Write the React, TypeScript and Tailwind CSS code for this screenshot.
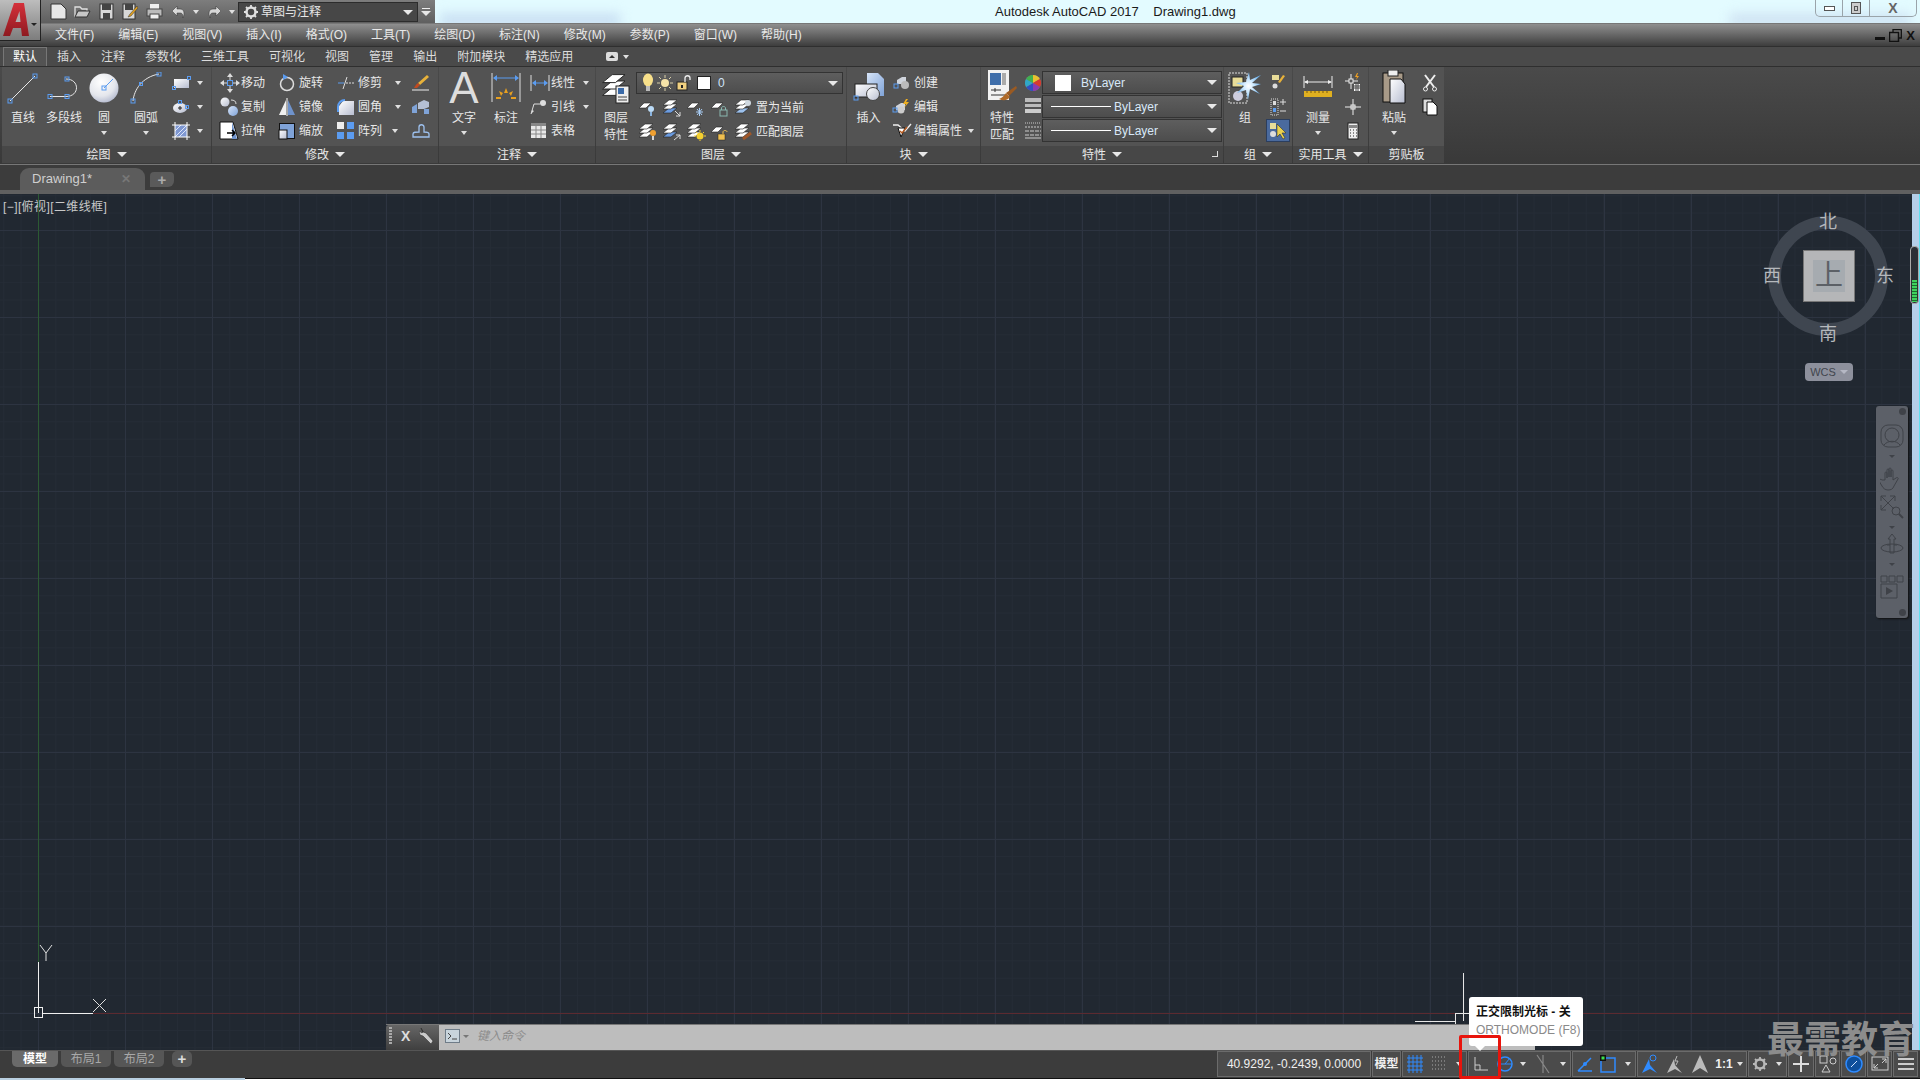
import React from "react";

const B = "#5b9cf0";
const W = "#e8e8e8";
type C = { children?: React.ReactNode };
const Svg = ({ w, h, children }: C & { w: number; h: number }) => (
  <svg width={w} height={h} viewBox={`0 0 ${w} ${h}`} fill="none" className="block shrink-0">{children}</svg>
);
const H = ({ x, y, s = 4 }: { x: number; y: number; s?: number }) => <rect x={x - s / 2} y={y - s / 2} width={s} height={s} stroke={B} />;
const Down = () => <div className="w-0 h-0 border-x-[3px] border-x-transparent border-t-[4px] border-t-[#e0e0e0]" />;
const DownL = () => <div className="w-0 h-0 border-x-[5px] border-x-transparent border-t-[5px] border-t-[#e8e8e8]" />;

const Defs = () => (
  <svg width="0" height="0" className="absolute">
    <defs>
      <radialGradient id="gc" cx="0.4" cy="0.3" r="0.8"><stop offset="0" stopColor="#ffffff" /><stop offset="0.6" stopColor="#e4e6ec" /><stop offset="1" stopColor="#a9b0c8" /></radialGradient>
      <linearGradient id="gw" x1="0" y1="0" x2="1" y2="1"><stop offset="0" stopColor="#ffffff" /><stop offset="1" stopColor="#b7bdd0" /></linearGradient>
      <linearGradient id="gb" x1="0" y1="0" x2="1" y2="1"><stop offset="0" stopColor="#d6e4f8" /><stop offset="1" stopColor="#7fa3d8" /></linearGradient>
      <linearGradient id="gA" x1="0" y1="0" x2="0" y2="1"><stop offset="0" stopColor="#d5303a" /><stop offset="1" stopColor="#8e1a20" /></linearGradient>
      <radialGradient id="gs"><stop offset="0" stopColor="#ffffff" /><stop offset="0.4" stopColor="#cfeaff" /><stop offset="1" stopColor="#6fb4f0" /></radialGradient>
    </defs>
  </svg>
);

/* ---------- Draw ---------- */
const ILine = () => <Svg w={32} h={32}><path d="M3 29 28 4" stroke={W} /><H x={3} y={29} /><H x={28} y={4} /></Svg>;
const IPoly = () => <Svg w={34} h={24}><path d="M3 20.5H19M19 3c14 0 14 17.500 0 17.500" stroke={W} /><H x={3} y={20.5} /><H x={20} y={20.5} /><H x={20} y={3} /></Svg>;
const ICircle = () => <Svg w={32} h={32}><circle cx="16" cy="16" r="14.500" fill="url(#gc)" /><path d="M16 16 25 7" stroke={B} /><H x={16} y={16} /></Svg>;
const IArc = () => <Svg w={32} h={32}><path d="M3 29C4 18 12 5 29 2" stroke={W} /><H x={3} y={29} /><H x={11} y={12} s={3} /><H x={29} y={2} /></Svg>;
const IRect = () => <Svg w={20} h={14}><rect x="2" y="3" width="15" height="9" fill="url(#gw)" /><H x={2} y={12} s={3} /><H x={17} y={2} s={3} /></Svg>;
const IEll = () => <Svg w={20} h={14}><ellipse cx="8" cy="8" rx="7" ry="5" fill="url(#gw)" /><path d="M6 8h4M8 6v4" stroke="#222" /><H x={8} y={2} s={3} /><H x={15} y={7} s={3} /></Svg>;
const IHatch = () => <Svg w={18} h={18}><rect x="3" y="3" width="12" height="12" fill="#7f98d2" /><path d="M3 9 9 3M3 15 15 3M7 15l8-8" stroke="#dde6fa" /><path d="M0 3h18M0 15h18M3 0v18M15 0v18" stroke="#fff" /></Svg>;

/* ---------- Modify ---------- */
const IMove = () => <Svg w={22} h={22}><path d="M11 1 8 5h6zM11 21l-3-4h6zM1 11l4-3v6zM21 11l-4-3v6z" fill="#ddd" /><path d="M11 4v4M11 14v4M4 11h4M14 11h4" stroke="#ddd" /><rect x="8.500" y="8.500" width="5" height="5" stroke={B} /></Svg>;
const ICopy = () => <Svg w={22} h={22}><circle cx="6" cy="6" r="4.500" fill="url(#gw)" /><circle cx="14" cy="15" r="5" fill="url(#gb)" /><path d="M12 4c3 0 5 1 5 4" stroke="#ddd" /></Svg>;
const IStretch = () => <Svg w={22} h={22}><path d="M1 2h13l5 17H1z" fill="#fff" stroke="#111" /><path d="M13 2l5 17h-5z" fill="#6f93cc" /><path d="M8 13h8M13 10l3 3-3 3" stroke="#000" strokeWidth="1.500" /></Svg>;
const IRot = () => <Svg w={18} h={20}><circle cx="9" cy="11" r="6.500" stroke="#ddd" strokeWidth="1.500" /><path d="M5 1l5 3-5 3z" fill={B} /></Svg>;
const IMirror = () => <Svg w={18} h={20}><path d="M8 3 1 18h7z" fill="#f0f0f0" /><path d="M10 3l7 15h-7z" fill="#6f93cc" /><path d="M9 1v18" stroke="#fff" /></Svg>;
const IScale = () => <Svg w={18} h={18}><rect x="1.500" y="1.500" width="15" height="15" fill="#7fa3d8" stroke="#111" /><rect x="1" y="8" width="8" height="9" fill="url(#gw)" stroke="#111" /></Svg>;
const ITrim = () => <Svg w={18} h={14}><path d="M1 7h6" stroke={B} /><path d="M9 7h8" stroke="#ddd" strokeDasharray="2 1" /><path d="M10 1 6 13" stroke="#ddd" /></Svg>;
const IFillet = () => <Svg w={18} h={18}><path d="M6 3h11v14H2V8z" fill="url(#gw)" /><path d="M1 14V9c0-4 3-7 7-7" stroke={B} strokeWidth="2" /></Svg>;
const IArray = () => <Svg w={18} h={18}><rect x="0" y="0" width="7" height="7" fill="#eee" /><rect x="10" y="0" width="7" height="7" fill={B} /><rect x="0" y="10" width="7" height="7" fill={B} /><rect x="10" y="10" width="7" height="7" fill={B} /></Svg>;
const IBrush = () => <Svg w={18} h={18}><path d="M15 1l2 2-9 8-2-2z" fill="#e8b23a" /><path d="M6 9l2 2-3 3H2c1-1 1-3 4-5z" fill="#c04a20" /><path d="M0 16h17" stroke="#eee" /></Svg>;
const IExpl = () => <Svg w={18} h={16}><path d="M0 8l5-3v9H0z" fill="#7fa3d8" /><path d="M6 4l6-3 5 2v5l-5 2H6z" fill="#b5c0d5" /><path d="M12 10h5v5h-5z" fill="#7fa3d8" /></Svg>;
const IOff = () => <Svg w={18} h={16}><path d="M1 14h16v-3c0-2-3-2-5-2V4c0-3-5-3-5 0v5C4 9 1 9 1 11z" stroke="#9ec2f0" strokeWidth="1.300" /></Svg>;

/* ---------- Annotate ---------- */
const IDim = () => <Svg w={30} h={30}><path d="M1 0v29M29 0v29" stroke="#ddd" /><path d="M3 5h24" stroke={B} /><path d="M2 5l4-3v6zM28 5l-4-3v6z" fill={B} /><path d="M15 15l-2 5h4zM8 18l2 5 2-3zM22 18l-2 5-2-3zM5 24h5v2H5zM20 24h5v2h-5z" fill="#e8a020" /></Svg>;
const ILin = () => <Svg w={20} h={16}><path d="M1 0v16M19 0v16" stroke="#ddd" /><path d="M3 8h14" stroke={B} /><path d="M2 8l4-3v6zM18 8l-4-3v6z" fill={B} /></Svg>;
const ILead = () => <Svg w={20} h={16}><path d="M1 15l3-10h6" stroke="#ddd" /><path d="M1 15l1-4 2 1z" fill="#ddd" /><circle cx="13" cy="4" r="3" fill="#ddd" /></Svg>;
const ITbl = () => <Svg w={18} h={16}><rect x="1" y="0" width="15" height="15" fill="#e8e8e8" /><rect x="1" y="0" width="15" height="3" fill="#888" /><path d="M1 7h15M1 11h15M6 3v12M11 3v12" stroke="#888" /></Svg>;

/* ---------- Layer ---------- */
const Stack = ({ c = "#fff" }: { c?: string }) => <g><path d="M1 14 7 9h8l-6 5z" fill={c} stroke="#222" strokeWidth=".6" /><path d="M1 10 7 5h8l-6 5z" fill="#fff" stroke="#222" strokeWidth=".6" /><path d="M1 6 7 1h8L9 6z" fill="#fff" stroke="#222" strokeWidth=".6" /></g>;
const Flat = () => <path d="M1 9 6 4h7L8 9z" fill="#fff" stroke="#222" strokeWidth=".6" />;
const ILayerBig = () => <Svg w={30} h={32}><g transform="translate(0 1) scale(1.600)"><Stack /></g><rect x="15" y="14" width="13" height="17" fill="#eee" stroke="#222" /><rect x="17" y="16" width="6" height="6" fill="#3a6aa8" /><path d="M17 25h9M17 28h9" stroke="#444" /></Svg>;
const L = ({ children }: C) => <Svg w={20} h={18}>{children}</Svg>;
const IBulb = ({ c = "#f8e08a" }: { c?: string }) => <Svg w={12} h={20}><ellipse cx="6" cy="7" rx="5" ry="6.500" fill={c} /><rect x="4" y="13" width="4" height="5" fill="#bbb" /></Svg>;
const ISun = () => <Svg w={16} h={16}><circle cx="8" cy="8" r="4" fill="#f4e2a8" /><path d="M8 0v3M8 13v3M0 8h3M13 8h3M2 2l2 2M12 12l2 2M14 2l-2 2M2 14l2-2" stroke="#d8cfa8" /></Svg>;
const ILock = () => <Svg w={16} h={16}><rect x="1" y="7" width="10" height="8" fill="#f0d080" stroke="#222" /><path d="M9 7V3c0-3 5-3 5 0v2" stroke="#eee" strokeWidth="1.300" /><rect x="5" y="10" width="2" height="3" fill="#222" /></Svg>;
const layerRows: React.ReactNode[][] = [
  [
    <L><Flat /><rect x="10" y="7" width="6" height="6" rx="3" fill="#bcdcf8" /><path d="M13 13v4" stroke="#8ab4e0" strokeWidth="2" /></L>,
    <L><Stack c="#6c9ce0" /><path d="M13 12l5 5M18 13v4h-4" stroke="#ddd" /></L>,
    <L><Flat /><path d="M10 13h7M13.500 9v8M11 10l5 6M16 10l-5 6" stroke="#a8ccf4" /></L>,
    <L><Flat /><rect x="10" y="11" width="7" height="6" stroke="#8ab8b0" /><path d="M11.500 11V9c0-2 4-2 4 0v2" stroke="#8ab8b0" /></L>,
    <L><Stack c="#9cc0ec" /><circle cx="14" cy="4" r="3" fill="#cfd8e0" /></L>,
  ],
  [
    <L><Stack /><circle cx="15" cy="10" r="3" fill="#f0a030" /><path d="M15 13v4" stroke="#d8d8d8" strokeWidth="2" /></L>,
    <L><Stack c="#6c9ce0" /><path d="M12 17l6-5M14 12h4v4" stroke="#ddd" /></L>,
    <L><Stack /><circle cx="14" cy="13" r="3.500" fill="#f4d030" /><path d="M14 7v2M14 17v1M8 13h2M18 13h2M10 9l1 1M18 9l-1 1" stroke="#f4d030" /></L>,
    <L><Flat /><rect x="8" y="11" width="7" height="6" fill="#f0c050" stroke="#222" strokeWidth=".5" /><path d="M13 11V9c0-2 4-2 4 0" stroke="#f0c050" /></L>,
    <L><Stack /><path d="M9 16l8-6" stroke="#a0582a" strokeWidth="3" /></L>,
  ],
];

/* ---------- Block / Props ---------- */
const IInsert = () => <Svg w={32} h={32}><path d="M14 1h11l6 6v17H14z" fill="url(#gb)" /><rect x="2" y="12" width="22" height="13" fill="url(#gw)" stroke="#222" /><circle cx="20" cy="22" r="6.500" fill="url(#gw)" stroke="#444" /><H x={3} y={26} /></Svg>;
const ICreate = () => <Svg w={20} h={14}><path d="M5 4l5-3h4v7H5z" fill="#cfd4dc" /><circle cx="13" cy="9" r="4" fill="#bbb" /><H x={4} y={10} s={4} /></Svg>;
const IEdit = () => <Svg w={20} h={16}><path d="M4 7l5-3h4v7H4z" fill="#cfd4dc" /><circle cx="9" cy="11" r="3.500" fill="#ccc" /><path d="M14 0l-3 5h3l-2 4 5-6h-3l2-3z" fill="#f0b020" /><H x={3} y={11} s={4} /></Svg>;
const IAttr = () => <Svg w={20} h={16}><path d="M1 2h5l7 6 6-7" stroke="#eee" strokeWidth="1.400" /><path d="M6 5h7L9 14z" fill="#fff" stroke="#111" /><path d="M8 8l2 2 5-6" stroke="#b55a20" strokeWidth="1.500" /></Svg>;
const IMatch = () => <Svg w={30} h={36}><rect x="1" y="0" width="21" height="30" fill="#f2f2f2" /><rect x="3" y="3" width="11" height="12" fill="#3f6eaa" /><rect x="15" y="3" width="4" height="12" fill="#aaa" /><path d="M4 20h10M8 18v4M4 25h14" stroke="#333" /><path d="M29 16l1 2-8 8-3-3z" fill="#9a5a22" /><path d="M19 23l4 4c-3 4-7 4-11 2 3-1 5-3 7-6z" fill="#b06a28" /></Svg>;
const IWheel = () => <Svg w={16} h={16}><circle cx="8" cy="8" r="8" fill="#777" /><path d="M8 8V0a8 8 0 0 1 6.900 4z" fill="#e8c030" /><path d="M8 8l6.900-4a8 8 0 0 1 0 8z" fill="#d83a30" /><path d="M8 8l6.900 4A8 8 0 0 1 8 16z" fill="#8a3ab0" /><path d="M8 8v8a8 8 0 0 1-6.900-4z" fill="#3050c0" /><path d="M8 8l-6.900 4a8 8 0 0 1 0-8z" fill="#30a8c8" /><path d="M8 8 1.100 4A8 8 0 0 1 8 0z" fill="#40b050" /></Svg>;
const ILw = () => <Svg w={16} h={18}><rect width="16" height="4" y="0" fill="#bbb" /><rect width="16" height="3" y="6" fill="#bbb" /><rect width="16" height="4" y="11" fill="#ccc" /></Svg>;
const ILt = () => <Svg w={16} h={18}><path d="M0 1h16" stroke="#ccc" strokeDasharray="1 1" /><path d="M0 5h16" stroke="#ccc" strokeDasharray="2 1" /><path d="M0 9h16M0 13h16" stroke="#ccc" strokeDasharray="4 1" /><path d="M0 16h16" stroke="#ccc" /></Svg>;

/* ---------- Group / Util / Clip ---------- */
const IGroup = () => <Svg w={34} h={32}><rect x="1" y="1" width="18" height="30" stroke="#ddd" strokeDasharray="2 1" /><rect x="4" y="5" width="11" height="10" fill="#e8dc98" stroke="#222" /><circle cx="10" cy="24" r="5" fill="#ccd" /><path d="M21 0l1 8 11-5-9 8 9 1-9 3 8 7-10-5-2 11-2-10-9 3 7-7-8-3 10-1z" fill="url(#gs)" /></Svg>;
const ISel = () => <Svg w={16} h={18}><rect x="2" y="1" width="7" height="5" fill="#e8dc98" /><circle cx="5" cy="12" r="2.500" fill="#ddd" /><path d="M8 8l5-7 2 1-5 7z" fill="#e8b23a" /></Svg>;
const IGrpAdd = () => <Svg w={16} h={18}><rect x="1" y="1" width="7" height="16" stroke="#ddd" strokeDasharray="1 1" /><rect x="3" y="3" width="3" height="4" fill="#ddd" /><rect x="3" y="10" width="3" height="4" fill={B} /><path d="M10 4h6M13 1v6M10 13h6" stroke="#ddd" /></Svg>;
const IGrpOn = () => <Svg w={18} h={20}><rect x="1" y="2" width="6" height="6" fill="#e8dc98" /><circle cx="4" cy="13" r="3" fill="#ddd" /><path d="M8 3v13l3-3 3 5 2-1-3-5h4z" fill="#e8d050" stroke="#222" strokeWidth=".5" /></Svg>;
const IMeasure = () => <Svg w={30} h={30}><path d="M1 3v12M29 3v12M2 9h26" stroke="#eee" /><path d="M1 9l4-2v4zM29 9l-4-2v4z" fill="#eee" /><rect x="1" y="18" width="28" height="6" fill="#e0b020" /><path d="M4 18v2M8 18v2M12 18v2M16 18v2M20 18v2M24 18v2" stroke="#7a5a10" /></Svg>;
const IUt1 = () => <Svg w={16} h={20}><path d="M0 8h13M6 1v15" stroke="#eee" /><rect x="4" y="6" width="4" height="4" fill="#555" stroke="#eee" /><path d="M12 0l-2 4h2l-1 3 3-4h-2l1-3z" fill="#f0a020" /><rect x="9" y="11" width="6" height="7" fill="#fff" /><path d="M9 13h6M9 15h6M11 11v7M13 11v7" stroke="#444" /></Svg>;
const IUt2 = () => <Svg w={16} h={20}><path d="M0 10h16M8 2v16" stroke="#eee" /><rect x="6" y="8" width="4" height="4" stroke="#eee" /></Svg>;
const ICalc = () => <Svg w={12} h={18}><rect x="1" y="1" width="10" height="16" fill="#eee" stroke="#222" /><rect x="2" y="3" width="8" height="3" fill="#888" /><path d="M3 8h1M6 8h1M9 8h1M3 11h1M6 11h1M9 11h1M3 14h1M6 14h1M9 14h1" stroke="#222" /></Svg>;
const IPaste = () => <Svg w={24} h={36}><rect x="1" y="3" width="20" height="29" fill="#a89a88" stroke="#111" /><rect x="6" y="0" width="10" height="6" fill="#eee" stroke="#222" /><path d="M8 9h11l4 5v19H8z" fill="url(#gw)" stroke="#111" /></Svg>;
const ICut = () => <Svg w={14} h={18}><path d="M2 1l9 12M12 1 3 13" stroke="#eee" strokeWidth="2" /><circle cx="2.500" cy="15" r="2" stroke="#eee" /><circle cx="11.500" cy="15" r="2" stroke="#eee" /></Svg>;
const ICopy2 = () => <Svg w={16} h={18}><rect x="1" y="1" width="9" height="13" fill="#ddd" stroke="#111" /><path d="M5 4h6l4 4v9H5z" fill="#fff" stroke="#111" /></Svg>;

/* ---------- QAT ---------- */
const QNew = () => <Svg w={17} h={17}><path d="M1 1h10l5 5v10H1z" fill="#e6e6e6" stroke="#333" /></Svg>;
const QOpen = () => <Svg w={17} h={15}><path d="M1 13V3h5l2 2h5v2" stroke="#e0e0e0" strokeWidth="1.300" /><path d="M1 13l3-6h12l-3 6z" fill="#c8c8c8" stroke="#333" /></Svg>;
const QSave = () => <Svg w={15} h={17}><rect x="1" y="1" width="13" height="15" fill="#d8d8d8" stroke="#333" /><rect x="3" y="1" width="9" height="6" fill="#444" /><rect x="4" y="10" width="7" height="6" fill="#444" /></Svg>;
const QSaveAs = () => <Svg w={16} h={17}><rect x="1" y="1" width="12" height="15" fill="#d8d8d8" stroke="#333" /><rect x="3" y="1" width="8" height="6" fill="#444" /><path d="M15 3 8 11l-2 3 3-1 7-8z" fill="#e0a020" stroke="#333" strokeWidth=".5" /></Svg>;
const QPrint = () => <Svg w={17} h={17}><rect x="4" y="1" width="9" height="6" fill="#eee" /><rect x="1" y="6" width="15" height="7" fill="#bbb" stroke="#444" /><rect x="4" y="11" width="9" height="5" fill="#eee" stroke="#444" /></Svg>;
const QUndo = ({ f }: { f?: boolean }) => <Svg w={15} h={14}><g transform={f ? "translate(15 0) scale(-1 1)" : ""}><path d="M6 1 1 6l5 5V8h3c2 0 3 1 3 5 2-5 1-9-3-9H6z" fill="#d8d8d8" stroke="#333" strokeWidth=".5" /></g></Svg>;
const Gear = ({ c = "#e0e0e0" }: { c?: string }) => <Svg w={14} h={14}><circle cx="7" cy="7" r="4.500" stroke={c} strokeWidth="2.500" /><path d="M7 0v3M7 11v3M0 7h3M11 7h3M2 2l2 2M10 10l2 2M12 2l-2 2M2 12l2-2" stroke={c} strokeWidth="1.800" /></Svg>;

/* ---------- Components ---------- */
const Panel = ({ w, label, arrow = true, launcher, children }: C & { w: string; label: string; arrow?: boolean; launcher?: boolean }) => (
  <div className={`${w} shrink-0 flex flex-col`}>
    <div className="h-[79px] flex bg-[#535353]">{children}</div>
    <div className="h-[18px] relative flex items-center justify-center gap-[6px] bg-[#474747] text-[12px] text-[#e8e8e8] border-b border-[#3a3a3a]">
      <span>{label}</span>
      {arrow && <DownL />}
      {launcher && <span className="absolute right-[5px] top-[5px] w-[6px] h-[6px] border-r border-b border-[#ddd]" />}
    </div>
  </div>
);
const Large = ({ w, i, t, t2, a }: { w: string; i: React.ReactNode; t: string; t2?: string; a?: boolean }) => (
  <div className={`${w} shrink-0 flex flex-col items-center`}>
    <div className="h-[42px] flex items-center justify-center">{i}</div>
    <div className="h-[18px] leading-[18px] text-[12px] text-[#e8e8e8] whitespace-nowrap">{t}</div>
    {t2 && <div className="h-[17px] leading-[17px] text-[12px] text-[#e8e8e8] whitespace-nowrap">{t2}</div>}
    {a && <div className="h-[12px] flex items-center"><Down /></div>}
  </div>
);
const Row = ({ i, t, a, box = "w-[21px]", gap = "ml-[8px]" }: { i: React.ReactNode; t?: string; a?: boolean; box?: string; gap?: string }) => (
  <div className="h-[24px] flex items-center">
    <div className={`${box} shrink-0 flex items-center justify-start`}>{i}</div>
    {t && <span className="text-[12px] text-[#e8e8e8] whitespace-nowrap">{t}</span>}
    {a && <div className={gap}><Down /></div>}
  </div>
);
const Col = ({ c, children }: C & { c: string }) => <div className={`${c} shrink-0 flex flex-col pt-[4px]`}>{children}</div>;
const Cen = ({ children }: C) => <div className="h-[24px] flex items-center justify-center">{children}</div>;
const Drop = ({ children, h = "h-[23px]" }: C & { h?: string }) => (
  <div className={`${h} w-full flex items-center relative border border-[#333] bg-[linear-gradient(#5e5e5e,#4d4d4d)] text-[12px] text-[#e8e8e8]`}>
    {children}
    <div className="absolute right-[4px] top-[8px]"><DownL /></div>
  </div>
);

const Group = ({ w, children }: C & { w: string }) => (
  <div className={`${w} h-[26px] shrink-0 flex items-center justify-around border border-[#6b6b6b] bg-[#4b4b4b] text-[12px] text-[#f0f0f0]`}>{children}</div>
);
const NavArrow = ({ c }: { c: string }) => <div className={`${c} w-0 h-0 border-x-[3px] border-x-transparent border-t-[3px] border-t-[#3f4248]`} />;

const menu = ["文件(F)", "编辑(E)", "视图(V)", "插入(I)", "格式(O)", "工具(T)", "绘图(D)", "标注(N)", "修改(M)", "参数(P)", "窗口(W)", "帮助(H)"];
const tabs = ["插入", "注释", "参数化", "三维工具", "可视化", "视图", "管理", "输出", "附加模块", "精选应用"];

export default function App() {
  return (
    <div className="relative w-[1920px] h-[1080px] overflow-hidden flex flex-col bg-[#3c3c3c] [font-family:'Liberation_Sans','Noto_Sans_CJK_SC',sans-serif]">
      <Defs />
      {/* title bar */}
      <div className="relative h-[24px] flex items-center shrink-0 overflow-hidden bg-[#e3fbff] border-b border-[#777]">
        <div className="absolute left-[440px] top-[14px] w-[180px] h-[12px] bg-[#c6dcf2] blur-[6px]" />
        <div className="absolute left-[1730px] top-[14px] w-[180px] h-[12px] bg-[#cde0f2] blur-[6px]" />
        <div className="relative w-[435px] h-[24px] shrink-0 flex items-center pl-[46px] bg-[linear-gradient(#7d7d7d,#5e5e5e)]">
          {[<QNew />, <QOpen />, <QSave />, <QSaveAs />, <QPrint />, <QUndo />].map((x, k) => (
            <div key={k} className="w-[24px] flex justify-center">{x}</div>
          ))}
          <div className="w-[12px] flex justify-center"><Down /></div>
          <div className="w-[24px] flex justify-center"><QUndo f /></div>
          <div className="w-[12px] flex justify-center"><Down /></div>
          <div className="w-[180px] h-[20px] flex items-center pl-[5px] gap-[3px] relative border border-[#2c2c2c] bg-[#474747] text-[12px] text-[#e8e8e8]">
            <Gear />
            <span>草图与注释</span>
            <div className="absolute right-[4px] top-[7px]"><DownL /></div>
          </div>
          <div className="w-[16px] flex flex-col items-center gap-[2px]">
            <div className="w-[8px] h-[1px] bg-[#eee]" />
            <DownL />
          </div>
        </div>
        <span className="relative ml-[560px] text-[13px] text-[#1a1a1a] whitespace-pre">Autodesk AutoCAD 2017    Drawing1.dwg</span>
        <div className="absolute right-[3px] top-0 w-[102px] h-[17px] flex items-center border border-t-0 border-[#9aa4aa] rounded-b-[5px] text-[#555]">
          <div className="w-[27px] h-full flex items-center justify-center border-r border-[#9aa4aa]"><div className="w-[11px] h-[5px] border border-[#555] bg-white" /></div>
          <div className="w-[27px] h-full flex items-center justify-center border-r border-[#9aa4aa]"><div className="w-[10px] h-[12px] border border-[#555] bg-[#ccc] flex items-center justify-center"><div className="w-[4px] h-[5px] border border-[#555]" /></div></div>
          <div className="flex-1 h-full flex items-center justify-center text-[14px] font-bold text-[#666]">X</div>
        </div>
      </div>
      {/* menu bar */}
      <div className="h-[23px] shrink-0 flex items-center pl-[55px] pr-[5px] gap-[24px] bg-[linear-gradient(#8f8f8f,#3d3d3d)] border-b border-[#2f2f2f] text-[12px] text-[#e8e8e8] whitespace-nowrap">
        {menu.map((m) => <span key={m}>{m}</span>)}
        <div className="ml-auto flex items-center gap-[4px]">
          <div className="w-[10px] h-[3px] mt-[6px] bg-[#111]" />
          <Svg w={13} h={13}><rect x="0.500" y="3.500" width="9" height="9" stroke="#111" strokeWidth="1.500" /><path d="M4 3V0.700h8.300V9H10" stroke="#111" strokeWidth="1.300" /></Svg>
          <span className="text-[13px] font-bold text-[#111] leading-none">X</span>
        </div>
      </div>
      {/* tabs */}
      <div className="h-[20px] shrink-0 flex items-end pl-[3px] bg-[#4a4a4a] border-b border-[#2f2f2f] text-[12px] text-[#dcdcdc] whitespace-nowrap">
        <div className="h-[19px] px-[9px] flex items-center text-white bg-[#535353] border border-b-0 border-[#777]">默认</div>
        {tabs.map((t) => <div key={t} className="h-[19px] px-[10px] flex items-center">{t}</div>)}
        <div className="h-[19px] ml-[23px] flex items-center gap-[5px]">
          <div className="w-[12px] h-[9px] rounded-[2px] bg-[#ddd] flex items-center justify-center"><div className="w-0 h-0 border-x-[3px] border-x-transparent border-b-[3px] border-b-[#333]" /></div>
          <Down />
        </div>
      </div>
      {/* ribbon */}
      <div className="h-[98px] shrink-0 flex pl-[2px] gap-[1px] bg-[linear-gradient(#4a4a4a,#393939)] border-b border-[#777]">
        <Panel w="w-[209px]" label="绘图">
          <Large w="w-[42px]" i={<ILine />} t="直线" />
          <Large w="w-[40px]" i={<IPoly />} t="多段线" />
          <Large w="w-[40px]" i={<ICircle />} t="圆" a />
          <Large w="w-[44px]" i={<IArc />} t="圆弧" a />
          <Col c="w-[40px] pl-[4px]">
            <Row i={<IRect />} box="w-[23px]" a gap="ml-[2px]" />
            <Row i={<IEll />} box="w-[23px]" a gap="ml-[2px]" />
            <Row i={<IHatch />} box="w-[23px]" a gap="ml-[2px]" />
          </Col>
        </Panel>
        <Panel w="w-[226px]" label="修改">
          <Col c="w-[66px] pl-[7px]">
            <Row i={<IMove />} box="w-[22px]" t="移动" />
            <Row i={<ICopy />} box="w-[22px]" t="复制" />
            <Row i={<IStretch />} box="w-[22px]" t="拉伸" />
          </Col>
          <Col c="w-[59px]">
            <Row i={<IRot />} t="旋转" />
            <Row i={<IMirror />} t="镜像" />
            <Row i={<IScale />} t="缩放" />
          </Col>
          <Col c="w-[75px]">
            <Row i={<ITrim />} t="修剪" a gap="ml-[13px]" />
            <Row i={<IFillet />} t="圆角" a gap="ml-[13px]" />
            <Row i={<IArray />} t="阵列" a gap="ml-[10px]" />
          </Col>
          <Col c="w-[22px]">
            <Row i={<IBrush />} />
            <Row i={<IExpl />} />
            <Row i={<IOff />} />
          </Col>
        </Panel>
        <Panel w="w-[156px]" label="注释">
          <Large w="w-[50px]" i={<span className="text-[44px] leading-[42px] text-[#ddd]">A</span>} t="文字" a />
          <Large w="w-[34px]" i={<IDim />} t="标注" />
          <Col c="w-[72px] pl-[7px]">
            <Row i={<ILin />} t="线性" a />
            <Row i={<ILead />} t="引线" a />
            <Row i={<ITbl />} t="表格" />
          </Col>
        </Panel>
        <Panel w="w-[250px]" label="图层">
          <Large w="w-[40px]" i={<ILayerBig />} t="图层" t2="特性" />
          <div className="w-[207px] shrink-0 flex flex-col pt-[5px]">
            <Drop h="h-[22px]">
              <div className="flex items-center pl-[5px] gap-[3px]">
                <IBulb /><ISun /><ILock />
                <div className="w-[14px] h-[14px] ml-[2px] bg-white border border-[#222]" />
                <span className="ml-[4px] text-[#d0e4fa]">0</span>
              </div>
            </Drop>
            <div className="h-[2px]" />
            {layerRows.map((r, ri) => (
              <div key={ri} className="h-[24px] flex items-center">
                {r.map((x, k) => <div key={k} className="w-[24px] flex justify-center">{x}</div>)}
                <span className="text-[12px] text-[#e8e8e8]">{ri === 0 ? "置为当前" : "匹配图层"}</span>
              </div>
            ))}
          </div>
        </Panel>
        <Panel w="w-[133px]" label="块">
          <Large w="w-[43px]" i={<IInsert />} t="插入" />
          <Col c="w-[90px] pl-[2px]">
            <Row i={<ICreate />} box="w-[22px]" t="创建" />
            <Row i={<IEdit />} box="w-[22px]" t="编辑" />
            <Row i={<IAttr />} box="w-[22px]" t="编辑属性" a gap="ml-[6px]" />
          </Col>
        </Panel>
        <Panel w="w-[242px]" label="特性" launcher>
          <Large w="w-[42px]" i={<IMatch />} t="特性" t2="匹配" />
          <div className="w-[19px] shrink-0 flex flex-col pt-[4px]">
            <Cen><IWheel /></Cen>
            <Cen><ILw /></Cen>
            <Cen><ILt /></Cen>
          </div>
          <div className="w-[180px] shrink-0 flex flex-col pt-[4px] gap-[1px]">
            <Drop>
              <div className="ml-[12px] w-[16px] h-[16px] bg-white" />
              <span className="ml-[10px] text-[#d8e8f8]">ByLayer</span>
            </Drop>
            <Drop>
              <div className="ml-[8px] w-[60px] h-[1px] bg-white" />
              <span className="ml-[3px] text-[#d8e8f8]">ByLayer</span>
            </Drop>
            <Drop>
              <div className="ml-[8px] w-[60px] h-[1px] bg-white" />
              <span className="ml-[3px] text-[#d8e8f8]">ByLayer</span>
            </Drop>
          </div>
        </Panel>
        <Panel w="w-[68px]" label="组">
          <Large w="w-[42px]" i={<IGroup />} t="组" />
          <div className="w-[24px] shrink-0 flex flex-col pt-[4px]">
            <Cen><ISel /></Cen>
            <Cen><IGrpAdd /></Cen>
            <div className="h-[23px] flex items-center justify-center bg-[#4a6a9e] border border-[#2b3e5e]"><IGrpOn /></div>
          </div>
        </Panel>
        <Panel w="w-[75px]" label="实用工具">
          <Large w="w-[50px]" i={<IMeasure />} t="测量" a />
          <div className="w-[20px] shrink-0 flex flex-col pt-[4px]">
            <Cen><IUt1 /></Cen>
            <Cen><IUt2 /></Cen>
            <Cen><ICalc /></Cen>
          </div>
        </Panel>
        <Panel w="w-[75px]" label="剪贴板" arrow={false}>
          <Large w="w-[50px]" i={<IPaste />} t="粘贴" a />
          <div className="w-[22px] shrink-0 flex flex-col pt-[4px]">
            <Cen><ICut /></Cen>
            <Cen><ICopy2 /></Cen>
          </div>
        </Panel>
      </div>
      {/* document tabs */}
      <div className="h-[25px] shrink-0 flex items-end pl-[20px] gap-[5px] bg-[#3c3c3c]">
        <div className="w-[125px] h-[22px] flex items-center pl-[12px] pr-[14px] justify-between bg-[#5c5c5c] rounded-t-[9px] text-[13px] text-[#cfcfcf]">
          <span>Drawing1*</span>
          <span className="text-[12px] text-[#777] font-bold">✕</span>
        </div>
        <div className="w-[24px] h-[15px] mb-[3px] flex items-center justify-center bg-[#5a5a5a] rounded-t-[4px] rounded-br-[6px] text-[15px] font-bold leading-none text-[#aaa]">+</div>
      </div>
      <div className="h-[4px] shrink-0 bg-[#606060]" />
      {/* canvas */}
      <div className="flex-1 min-h-0 flex">
        <div className="relative flex-1 bg-[#212831] [background-image:linear-gradient(#2d3441_1px,transparent_1px),linear-gradient(90deg,#2d3441_1px,transparent_1px),linear-gradient(#252c36_1px,transparent_1px),linear-gradient(90deg,#252c36_1px,transparent_1px)] [background-size:87px_87px,87px_87px,17.4px_17.4px,17.4px_17.4px] [background-position:38px_36px,38px_36px,3.2px_1.2px,3.2px_1.2px]">
          <span className="absolute left-[3px] top-[5px] text-[12px] leading-[16px] tracking-[0.4px] text-[#c8c8c8] whitespace-nowrap">[−][俯视][二维线框]</span>
          {/* axes */}
          <div className="absolute left-[38px] top-0 w-[1px] h-[768px] bg-[#2c5a33]" />
          <div className="absolute left-[89px] top-[819px] right-0 h-[1px] bg-[#5c2a30]" />
          <div className="absolute left-[1463px] top-[779px] w-[1px] h-[48px] bg-[#e6e6e6]" />
          <div className="absolute left-[1415px] top-[827px] w-[40px] h-[1px] bg-[#e6e6e6]" />
          <div className="absolute left-[1455px] top-[819px] w-[16px] h-[17px] border border-[#e6e6e6]" />
          <div className="absolute left-[30px] top-[748px]">
            <Svg w={80} h={80}>
              <path d="M8.500 20v51M12 71.500h51" stroke="#f0f0f0" />
              <rect x="4.500" y="65.500" width="8" height="10" stroke="#f0f0f0" />
              <path d="M10 3l6 8 6-8M16 11v8" stroke="#e0e0e0" />
              <path d="M63 57l13 13M76 57 63 70" stroke="#e0e0e0" />
            </Svg>
          </div>
          {/* view cube */}
          <div className="absolute left-[1768px] top-[22px] w-[120px] h-[120px] rounded-full border-[13px] border-[#3f4650]" />
          <div className="absolute left-[1803px] top-[56px] w-[52px] h-[52px] flex items-center justify-center bg-[#b5b6b8] border border-[#777]">
            <div className="w-[32px] h-[32px] flex items-center justify-center bg-[#a6abb0] text-[28px] leading-[32px] text-[#5c6066]">上</div>
          </div>
          <span className="absolute left-[1819px] top-[18px] text-[18px] leading-[20px] text-[#b5b8bc]">北</span>
          <span className="absolute left-[1819px] top-[130px] text-[18px] leading-[20px] text-[#b5b8bc]">南</span>
          <span className="absolute left-[1763px] top-[72px] text-[18px] leading-[20px] text-[#b5b8bc]">西</span>
          <span className="absolute left-[1876px] top-[72px] text-[18px] leading-[20px] text-[#b5b8bc]">东</span>
          <div className="absolute left-[1805px] top-[169px] w-[48px] h-[18px] flex items-center justify-center gap-[4px] rounded-[4px] bg-[#8d909c] text-[11px] text-[#41454d]">
            <span>WCS</span>
            <div className="w-0 h-0 border-x-[4px] border-x-transparent border-t-[4px] border-t-[#b5b8c4]" />
          </div>
          {/* nav bar */}
          <div className="absolute left-[1876px] top-[212px] w-[32px] h-[212px] flex flex-col items-center pt-[18px] rounded-[3px] bg-[#5c6068] shadow-[1px_1px_2px_#111]">
            <div className="absolute right-[2px] top-[2px] w-[7px] h-[7px] rounded-full bg-[#3f4248]" />
            <Svg w={24} h={24}><rect x="1" y="1" width="22" height="22" rx="7" stroke="#3f4248" /><circle cx="12" cy="11" r="7" stroke="#3f4248" /><path d="M4 21c4-5 12-5 16 0" stroke="#3f4248" /></Svg>
            <NavArrow c="mt-[7px]" />
            <div className="mt-[9px]"><Svg w={24} h={24}><path d="M5 13V6a1 1 0 0 1 2 0v5V3a1 1 0 0 1 2 0v7V2a1 1 0 0 1 2 0v8V4a1 1 0 0 1 2 0v9l3-2c1-1 3 0 2 1l-4 7c-1 3-3 4-6 4-3 0-5-2-6-4l-3-5c0-2 2-2 3-1z" stroke="#3f4248" /></Svg></div>
            <div className="mt-[3px]"><Svg w={26} h={26}><path d="M2 2l13 13M16 2 2 16M2 2h5M2 2v5M16 2h-5M16 2v5M2 16h5M2 16v-5" stroke="#3f4248" /><circle cx="17" cy="17" r="4" stroke="#3f4248" /><path d="M20 20l4 4" stroke="#3f4248" strokeWidth="2" /></Svg></div>
            <NavArrow c="mt-[6px]" />
            <div className="mt-[4px]"><Svg w={24} h={24}><path d="M12 1 8 6h2v14h4V6h2zM10 12H7M14 12h3" stroke="#3f4248" /><ellipse cx="12" cy="15" rx="11" ry="4" stroke="#3f4248" /></Svg></div>
            <NavArrow c="mt-[6px]" />
            <div className="mt-[9px]"><Svg w={24} h={24}><path d="M1 1h6v6H1zM9 1h6v6H9zM17 1h6v6h-6zM1 9h16v14H1z" stroke="#3f4248" /><path d="M6 12v8l7-4z" fill="#3f4248" /></Svg></div>
            <div className="absolute right-[2px] bottom-[2px] w-[7px] h-[7px] rounded-full bg-[#3f4248]" />
          </div>
          <div className="absolute left-[1910px] top-[52px] w-[9px] h-[58px] rounded-[4px] bg-[#2b2f36] border border-[#aaa] flex flex-col justify-end p-[1px] z-10">
            <div className="h-[22px] bg-[repeating-linear-gradient(#3fd25f_0_2px,#1d6a2f_2px_3px)]" />
          </div>
          {/* command line */}
          <div className="absolute left-[386px] bottom-0 w-[1149px] h-[26px] flex border-t border-[#777]">
            <div className="w-[53px] h-full flex items-center pl-[3px] pb-[3px] bg-[linear-gradient(#666,#3f3f3f)] rounded-tl-[3px]">
              <div className="w-[3px] h-[18px] bg-[repeating-linear-gradient(#aaa_0_2px,transparent_2px_3px)]" />
              <span className="ml-[9px] text-[14px] font-bold leading-none text-[#ddd]">X</span>
              <div className="ml-[9px]"><Svg w={16} h={18}><path d="M2 1l2 4 3 1 7 8-2 3-8-8-3-1-1-4 3 2 1-1z" fill="#ccc" stroke="#222" strokeWidth=".5" /></Svg></div>
            </div>
            <div className="flex-1 flex items-center pl-[6px] pb-[3px] bg-[#bdbdbd] text-[12px] text-[#8c8c8c]">
              <Svg w={15} h={14}><rect x="0.500" y="0.500" width="14" height="13" fill="#c8d4dc" stroke="#6f7c88" /><path d="M3 4l3 3-3 3M7 10h5" stroke="#444" /></Svg>
              <div className="ml-[3px] w-0 h-0 border-x-[3px] border-x-transparent border-t-[3px] border-t-[#777]" />
              <span className="ml-[8px] italic">键入命令</span>
            </div>
          </div>
          {/* watermark */}
          <span className="absolute left-[1767px] top-[825px] text-[37px] leading-[44px] font-bold text-[#8c8c8c] whitespace-nowrap z-10">最需教育</span>
          {/* tooltip */}
          <div className="absolute left-[1469px] top-[803px] w-[114px] h-[49px] flex flex-col justify-center pl-[7px] gap-[3px] rounded-[3px] bg-white z-20">
            <span className="text-[12px] leading-[15px] font-bold text-[#111] whitespace-nowrap">正交限制光标 - 关</span>
            <span className="text-[12px] leading-[15px] text-[#8a8a8a] whitespace-nowrap">ORTHOMODE (F8)</span>
            <div className="absolute left-[6px] -bottom-[5px] w-0 h-0 border-x-[5px] border-x-transparent border-t-[5px] border-t-white" />
          </div>
        </div>
        <div className="w-[8px] shrink-0 bg-[#b5cfe9] border-r border-[#5fe0f0]" />
      </div>
      {/* status bar */}
      <div className="relative h-[28px] shrink-0 flex items-center bg-[#3c3c3c] border-t border-[#555] text-[12px]">
        <div className="flex items-start self-start pl-[12px] gap-[3px] text-[#a8a8a8]">
          <div className="w-[46px] h-[16px] flex items-center justify-center rounded-b-[5px] bg-[#6a6a6a] font-bold text-white">模型</div>
          <div className="w-[50px] h-[16px] flex items-center justify-center rounded-b-[5px] bg-[#565656]">布局1</div>
          <div className="w-[50px] h-[16px] flex items-center justify-center rounded-b-[5px] bg-[#565656]">布局2</div>
          <div className="w-[20px] h-[16px] ml-[5px] flex items-center justify-center rounded-[5px] bg-[#565656] text-[15px] font-bold text-[#ddd]">+</div>
        </div>
        <div className="ml-auto mr-[2px] mb-[1px] flex items-center gap-[1px]">
          <Group w="w-[154px]">40.9292, -0.2439, 0.0000</Group>
          <Group w="w-[29px]"><span className="font-bold">模型</span></Group>
          <Group w="w-[65px]">
            <Svg w={16} h={18}><path d="M2 0v18M6 0v18M10 0v18M14 0v18M0 3h16M0 7h16M0 11h16M0 15h16" stroke="#2f8bff" /></Svg>
            <Svg w={16} h={16}><path d="M1 1h14M1 5h14M1 9h14M1 13h14" stroke="#aaa" strokeDasharray="1 2" /></Svg>
            <Down />
          </Group>
          <Group w="w-[103px]">
            <Svg w={16} h={16}><path d="M2 1v13h13M2 9h5v5" stroke="#ccc" /></Svg>
            <Svg w={16} h={16}><circle cx="8" cy="8" r="7" stroke="#2f8bff" strokeWidth="1.500" /><path d="M1 8h14M8 8l5-6" stroke="#2f8bff" /></Svg>
            <Down />
            <Svg w={18} h={20}><path d="M3 1l12 18M9 1v18" stroke="#888" strokeWidth="1.200" /></Svg>
            <Down />
          </Group>
          <Group w="w-[64px]">
            <Svg w={16} h={16}><path d="M1 15h14M1 15 14 2" stroke="#2f8bff" strokeWidth="1.500" /><circle cx="8" cy="8" r="2" fill="#2f8bff" /></Svg>
            <Svg w={17} h={18}><rect x="1" y="3" width="14" height="14" stroke="#2f8bff" strokeWidth="1.500" /><rect x="0" y="0" width="6" height="6" fill="#111" /><rect x="1.500" y="1.500" width="3" height="3" fill="#3fe04a" /></Svg>
            <Down />
          </Group>
          <Group w="w-[110px]">
            <Svg w={20} h={20}><path d="M2 19 9 5l1 6 7 8-7-4z" fill="#2f8bff" /><circle cx="13" cy="4" r="3" stroke="#2f8bff" /></Svg>
            <Svg w={20} h={20}><path d="M2 19 9 5l1 6 7 8-7-4z" fill="#bbb" /><path d="M12 2l-2 5h3l-2 4" stroke="#bbb" /></Svg>
            <Svg w={20} h={20}><path d="M2 19 10 1l8 18-8-5z" fill="#bbb" /></Svg>
            <span className="font-bold">1:1</span>
            <Down />
          </Group>
          <Group w="w-[39px]"><Gear c="#b8b8b8" /><Down /></Group>
          <Group w="w-[26px]"><Svg w={16} h={16}><path d="M8 0v16M0 8h16" stroke="#ddd" strokeWidth="2" /></Svg></Group>
          <Group w="w-[25px]"><Svg w={18} h={18}><rect x="1" y="1" width="7" height="7" stroke="#ccc" /><circle cx="14" cy="6" r="3" stroke="#ccc" /><path d="M7 10l4 7H3z" stroke="#ccc" /></Svg></Group>
          <Group w="w-[25px]"><Svg w={18} h={18}><circle cx="9" cy="9" r="8" fill="#0e4f9c" stroke="#2f8bff" strokeWidth="1.500" /><path d="M6 12l6-6" stroke="#cfe4ff" /></Svg></Group>
          <Group w="w-[25px]"><Svg w={18} h={16}><rect x="1" y="1" width="16" height="13" stroke="#ccc" /><path d="M3 12l4-4M11 7l4-4M3 8v4h4M15 7V3h-4" stroke="#ccc" /></Svg></Group>
          <Group w="w-[25px]"><Svg w={16} h={14}><path d="M0 2h16M0 7h16M0 12h16" stroke="#ccc" strokeWidth="2" /></Svg></Group>
        </div>
        {/* red highlight */}
        <div className="absolute left-[1459px] -top-[16px] w-[42px] h-[44px] border-[3px] border-[#e8140c] rounded-[2px] z-30" />
      </div>
      {/* taskbar sliver */}
      <div className="h-[2px] shrink-0 flex">
        <div className="w-[245px] bg-[#b9cfe0]" />
        <div className="flex-1 bg-white border-t border-[#111]" />
      </div>
      {/* logo */}
      <div className="absolute left-0 top-0 w-[41px] h-[41px] flex items-center justify-center bg-[linear-gradient(#bdbdbd,#7d7d7d)] border-r border-b border-[#222]">
        <Svg w={40} h={40}>
          <path d="M3 36 14 3h10l5 33h-7l-1-8h-8l-3 8z" fill="url(#gA)" />
          <path d="M15.500 22h5l-1-11z" fill="#b0b0b0" />
          <path d="M31 23h6l-3 3z" fill="#222" />
        </Svg>
      </div>
    </div>
  );
}
